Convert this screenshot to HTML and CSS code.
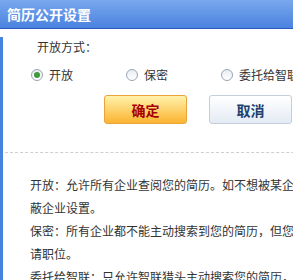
FILE: index.html
```html
<!DOCTYPE html>
<html lang="zh-CN">
<head>
	<meta charset="UTF-8">
	<title>简历公开设置</title>
	<link rel="stylesheet" href="styles.css">
</head>
<body>

<div class="dialog">
	<div class="dialog-title">简历公开设置</div>

	<div class="dialog-body">
		<div class="field-label">开放方式：</div>

		<!-- open mode choices -->
		<div class="radio-row">
			<label class="radio-item"><span class="radio checked"></span>开放</label>
			<label class="radio-item"><span class="radio"></span>保密</label>
			<label class="radio-item"><span class="radio"></span>委托给智联猎头</label>
		</div>

		<div class="button-row">
			<button class="btn btn-ok">确定</button>
			<button class="btn btn-cancel">取消</button>
		</div>

		<div class="divider"></div>

		<div class="notes">
			<p>开放：允许所有企业查阅您的简历。如不想被某企业查阅可屏蔽企业设置。</p>
			<p>保密：所有企业都不能主动搜索到您的简历，但您可以主动申请职位。</p>
			<p>委托给智联：只允许智联猎头主动搜索您的简历，企业不能搜索到。</p>
		</div>
	</div>
</div>

</body>
</html>
```

FILE: styles.css
```css
	body {
		margin: 0;
		padding: 0;
		background-color: white;
		color: #333;
		font-family: "Noto Sans CJK SC", "Liberation Sans", sans-serif;
		font-size: 12px;
		overflow: hidden;
		}

	.dialog {
		width: 440px;
		}

	.dialog-title {
		height: 28px;
		line-height: 28px;
		padding-left: 7px;
		color: white;
		font-size: 14px;
		font-weight: bold;
		background: linear-gradient(to bottom, #79a8ee, #4a82e0); /* Blue title bar */
		border-bottom: 1px solid #2d5cc0;
		}

	.dialog-body {
		border-left: 3px solid #4583de;
		padding-bottom: 20px;
		}

	.field-label {
		margin-top: 8px;
		padding-left: 34px;
		line-height: 20px;
		}

	.radio-row {
		display: flex;
		margin-top: 8px;
		padding-left: 28px;
		line-height: 20px;
		}

	.radio-item {
		display: flex;
		align-items: center;
		gap: 6px;
		flex: 0 0 95px;
		white-space: nowrap;
		}

	.radio-item:last-child {
		flex: 0 0 auto;
		}

	.radio {
		box-sizing: border-box;
		flex-shrink: 0;
		width: 12px;
		height: 12px;
		border: 1px solid #98a4b3;
		border-radius: 50%;
		background: linear-gradient(to bottom, #e9edf2, #ffffff);
		position: relative;
		}

	.radio.checked::after {
		content: '';
		position: absolute; /* Green dot over the circle */
		top: 2px;
		left: 2px;
		width: 6px;
		height: 6px;
		border-radius: 50%;
		background: #3f9b3a;
		}

	.button-row {
		display: flex;
		gap: 22px;
		margin-top: 10px;
		padding-left: 101px;
		}

	.btn {
		width: 83px;
		height: 29px;
		border-radius: 3px;
		font-family: "Noto Sans CJK SC", sans-serif;
		font-size: 14px;
		font-weight: bold;
		cursor: pointer;
		}

	.btn-ok {
		color: #a80000;
		background: linear-gradient(to bottom, #fff2ac, #fbb431);
		border: 1px solid #e9a43c;
		}

	.btn-cancel {
		color: #20406e;
		background: linear-gradient(to bottom, #ffffff, #e4ebf4);
		border: 1px solid #c3cedb;
		}

	.divider {
		margin-top: 28px;
		margin-left: 2px;
		border-top: 1px dashed #cfcfcf;
		}

	.notes {
		width: 324px; /* 27 characters per line */
		padding-left: 27px;
		margin-top: 20px;
		line-height: 23px;
		}

	.notes p {
		margin: 0;
		}
```
